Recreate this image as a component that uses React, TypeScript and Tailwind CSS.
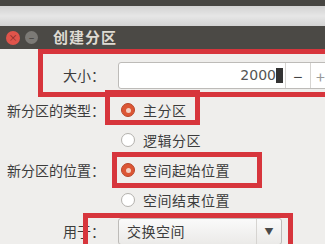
import React from "react";

function Radio({ checked }: { checked?: boolean }) {
  if (checked) {
    return (
      <span className="flex h-[14px] w-[14px] items-center justify-center rounded-full border border-[#b8452a] bg-[#dc5634]">
        <span className="h-[5px] w-[5px] rounded-full bg-[#f3cfc2]" />
      </span>
    );
  }
  return <span className="h-[14px] w-[14px] rounded-full border border-[#b3b1ad] bg-white" />;
}

function Mark({ className }: { className: string }) {
  return <div className={`pointer-events-none absolute border-[5px] border-[#d7353c] ${className}`} />;
}

export default function App() {
  return (
    <div className="relative h-[244px] w-[325px] overflow-hidden bg-[#efeeec] font-['Noto_Sans_CJK_SC',sans-serif] text-[#3c3c3c]">
      <div className="h-[6px] bg-[#464541]" />
      <div className="h-[20px] bg-gradient-to-b from-[#d2d2d2] via-[#e6e6e6] to-[#d3d3d3]" />

      <div className="flex h-[23px] items-center bg-[#4b4945] pl-[6px]">
        <span className="flex h-[14px] w-[14px] items-center justify-center rounded-full bg-[#e0544b] text-[9px] leading-none text-[#7d2a25]">
          ×
        </span>
        <span className="ml-[5px] flex h-[13px] w-[13px] items-center justify-center rounded-full bg-[#7c7a76] text-[10px] leading-none text-[#3e3c39]">
          −
        </span>
        <span className="ml-[15px] text-[15px] font-bold tracking-[1px] text-[#dedad2]">创建分区</span>
      </div>

      <div className="grid grid-cols-[105px_1fr] gap-x-[13px] pt-[13px] text-[14px]">
        <div className="flex h-[27px] items-center justify-end">大小：</div>
        <div className="flex h-[27px] w-[230px] rounded-[3px] border border-[#bdbbb8] bg-white">
          <div className="flex w-[166px] items-center justify-end pr-[2px] font-['DejaVu_Sans',sans-serif] text-[14px] text-[#555]">
            2000
            <span className="h-[15px] w-[7px] bg-[#333]" />
          </div>
          <div className="flex w-[25px] items-center justify-center border-l border-[#d6d4d1] text-[16px] text-[#444]">−</div>
          <div className="flex w-[20px] items-center justify-center border-l border-[#d6d4d1] text-[16px] text-[#999]">+</div>
        </div>

        <div className="mt-[6px] flex h-[30px] items-center justify-end">新分区的类型：</div>
        <div className="mt-[6px] flex h-[30px] items-center gap-[8px] pl-[3px] tracking-[0.5px]">
          <Radio checked />
          主分区
        </div>
        <div />
        <div className="flex h-[30px] items-center gap-[8px] pl-[3px] tracking-[0.5px]">
          <Radio />
          逻辑分区
        </div>

        <div className="flex h-[30px] items-center justify-end">新分区的位置：</div>
        <div className="flex h-[30px] items-center gap-[8px] pl-[3px] tracking-[0.5px]">
          <Radio checked />
          空间起始位置
        </div>
        <div />
        <div className="flex h-[30px] items-center gap-[8px] pl-[3px] tracking-[0.5px]">
          <Radio />
          空间结束位置
        </div>

        <div className="mt-[3px] flex h-[27px] items-center justify-end">用于：</div>
        <div className="mt-[3px] flex h-[27px] w-[164px] rounded-[3px] border border-[#bdbbb8] bg-gradient-to-b from-[#fafafa] to-[#ebeae8]">
          <div className="flex flex-1 items-center pl-[8px] tracking-[0.5px]">交换空间</div>
          <div className="flex w-[25px] items-center justify-center border-l border-[#d6d4d1] text-[9px] text-[#4a4a4a]">▼</div>
        </div>
      </div>

      <Mark className="left-[38px] top-[49px] h-[48px] w-[300px]" />
      <Mark className="left-[105px] top-[90px] h-[35px] w-[95px]" />
      <Mark className="left-[112px] top-[152px] h-[36px] w-[150px]" />
      <Mark className="left-[83px] top-[213px] h-[50px] w-[210px]" />
    </div>
  );
}
